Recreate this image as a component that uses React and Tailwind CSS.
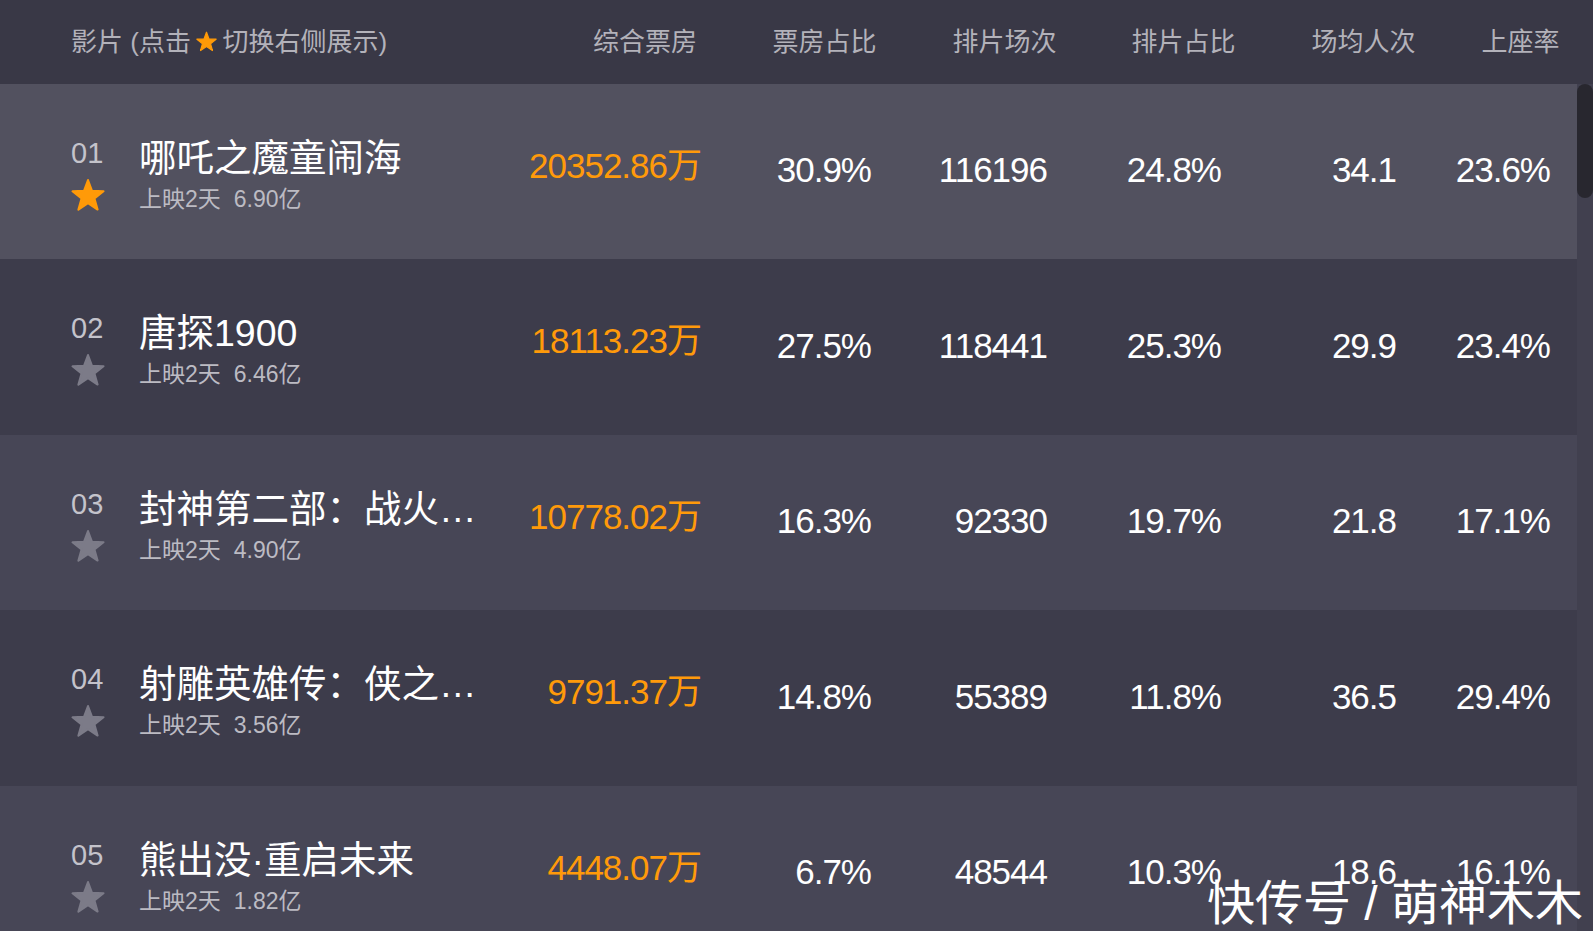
import React from "react";

const STAR_POINTS =
  "50,6 61.76,37.82 95.65,39.17 69.02,60.18 78.21,92.83 50,74 21.79,92.83 30.98,60.18 4.35,39.17 38.24,37.82";

function Star({ className, color }) {
  return (
    <svg viewBox="0 0 100 100" className={className}>
      <polygon
        points={STAR_POINTS}
        fill={color}
        stroke={color}
        strokeWidth="6"
        strokeLinejoin="round"
      />
    </svg>
  );
}

const rows = [
  {
    rank: "01",
    title: "哪吒之魔童闹海",
    total: "6.90亿",
    box: "20352.86万",
    boxPct: "30.9%",
    shows: "116196",
    showPct: "24.8%",
    avg: "34.1",
    seat: "23.6%",
    active: true,
  },
  {
    rank: "02",
    title: "唐探1900",
    total: "6.46亿",
    box: "18113.23万",
    boxPct: "27.5%",
    shows: "118441",
    showPct: "25.3%",
    avg: "29.9",
    seat: "23.4%",
  },
  {
    rank: "03",
    title: "封神第二部：战火西岐",
    total: "4.90亿",
    box: "10778.02万",
    boxPct: "16.3%",
    shows: "92330",
    showPct: "19.7%",
    avg: "21.8",
    seat: "17.1%",
  },
  {
    rank: "04",
    title: "射雕英雄传：侠之大者",
    total: "3.56亿",
    box: "9791.37万",
    boxPct: "14.8%",
    shows: "55389",
    showPct: "11.8%",
    avg: "36.5",
    seat: "29.4%",
  },
  {
    rank: "05",
    title: "熊出没·重启未来",
    total: "1.82亿",
    box: "4448.07万",
    boxPct: "6.7%",
    shows: "48544",
    showPct: "10.3%",
    avg: "18.6",
    seat: "16.1%",
  },
];

const rowBg = [
  "bg-[#52515f]",
  "bg-[#3d3c4b]",
  "bg-[#474656]",
  "bg-[#3d3c4b]",
  "bg-[#474656]",
];

function Row({ r, i }) {
  return (
    <div className={`flex h-[175.5px] w-[1577px] shrink-0 ${rowBg[i]}`}>
      <div className="flex w-[480px] shrink-0 pl-[71px] pt-[53px]">
        <div className="flex w-[68px] shrink-0 flex-col pt-[2px]">
          <div className="h-[29px] text-[29px] leading-none text-[#c4c3cb]">{r.rank}</div>
          <Star
            className="mt-[10px] h-[34px] w-[34px]"
            color={r.active ? "#ff9a08" : "#7c7b88"}
          />
        </div>
        <div className="-mt-[1px] flex min-w-0 flex-col">
          <div className="h-[45px] w-[345px] overflow-hidden text-ellipsis whitespace-nowrap text-[37.5px] leading-[45px] text-white">
            {r.title}
          </div>
          <div className="mt-[7px] flex text-[23px] leading-none text-[#bcbbc3]">
            <span>上映2天</span>
            <span className="ml-[13px]">{r.total}</span>
          </div>
        </div>
      </div>
      <div className="flex w-[221px] shrink-0 items-center justify-end pb-[12px] text-[35px] leading-none tracking-[-1px] text-[#ff9a0a]">
        {r.box}
      </div>
      <div className="flex w-[170px] shrink-0 items-center justify-end pb-[3px] text-[35px] leading-none tracking-[-1px] text-white">
        {r.boxPct}
      </div>
      <div className="flex w-[176px] shrink-0 items-center justify-end pb-[3px] text-[35px] leading-none tracking-[-1px] text-white">
        {r.shows}
      </div>
      <div className="flex w-[174px] shrink-0 items-center justify-end pb-[3px] text-[35px] leading-none tracking-[-1px] text-white">
        {r.showPct}
      </div>
      <div className="flex w-[175px] shrink-0 items-center justify-end pb-[3px] text-[35px] leading-none tracking-[-1px] text-white">
        {r.avg}
      </div>
      <div className="flex w-[154px] shrink-0 items-center justify-end pb-[3px] text-[35px] leading-none tracking-[-1px] text-white">
        {r.seat}
      </div>
    </div>
  );
}

export default function App() {
  return (
    <div className="relative flex h-[931px] w-[1593px] flex-col overflow-hidden bg-[#3d3c4b] font-['Liberation_Sans','Noto_Sans_CJK_SC',sans-serif]">
      <div className="flex h-[83.5px] w-[1593px] shrink-0 items-center bg-[#393846] text-[26px] leading-none text-[#b3b2ba]">
        <div className="flex w-[555px] shrink-0 items-center pl-[71px]">
          <span>影片 (点击</span>
          <Star className="ml-[5.5px] mr-[5px] h-[21px] w-[21px]" color="#ff9a08" />
          <span>切换右侧展示)</span>
        </div>
        <div className="w-[180px] shrink-0 text-center">综合票房</div>
        <div className="w-[179px] shrink-0 text-center">票房占比</div>
        <div className="w-[181px] shrink-0 text-center">排片场次</div>
        <div className="w-[177px] shrink-0 text-center">排片占比</div>
        <div className="w-[183px] shrink-0 text-center">场均人次</div>
        <div className="w-[131px] shrink-0 text-center">上座率</div>
      </div>
      <div className="flex min-h-0 flex-1">
        <div className="flex w-[1577px] shrink-0 flex-col">
          {rows.map((r, i) => (
            <Row key={r.rank} r={r} i={i} />
          ))}
        </div>
        <div className="w-[16px] shrink-0 bg-[#41404f]">
          <div className="h-[114.5px] w-[16px] rounded-[8px] bg-[#28272f]" />
        </div>
      </div>
      <div className="absolute left-[1207px] top-[880px] whitespace-nowrap text-[48px] leading-none text-white">
        快传号 / 萌神木木
      </div>
    </div>
  );
}
